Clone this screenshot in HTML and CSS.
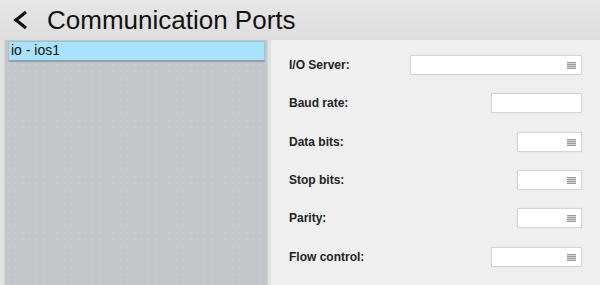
FILE: index.html
```html
<!DOCTYPE html>
<html>
<head>
<meta charset="utf-8">
<link rel="stylesheet" href="styles.css">
</head>
<body>
<div class="app">
  <header class="header">
    <svg class="back" width="18" height="20" viewBox="0 0 18 20"><polyline points="14,2 4,10 14,18" fill="none" stroke="#111" stroke-width="3.2" stroke-linejoin="miter"/></svg>
    <h1 class="title">Communication Ports</h1>
  </header>
  <div class="main">
    <aside class="sidebar">
      <div class="list-item">io - ios1</div>
    </aside>
    <section class="form">
      <div class="row"><span class="label">I/O Server:</span><div class="field w172"><span class="menu"></span></div></div>
      <div class="row"><span class="label">Baud rate:</span><div class="field w91"></div></div>
      <div class="row"><span class="label">Data bits:</span><div class="field w65"><span class="menu"></span></div></div>
      <div class="row"><span class="label">Stop bits:</span><div class="field w65"><span class="menu"></span></div></div>
      <div class="row"><span class="label">Parity:</span><div class="field w65"><span class="menu"></span></div></div>
      <div class="row"><span class="label">Flow control:</span><div class="field w91"><span class="menu"></span></div></div>
    </section>
  </div>
</div>
</body>
</html>
```
FILE: styles.css
```css
html, body {
  margin: 0;
  padding: 0;
}
body {
  width: 600px;
  height: 285px;
  overflow: hidden;
  font-family: "Liberation Sans", Arial, sans-serif;
  background: #e2e2e2;
}
.app {
  display: flex;
  flex-direction: column;
  height: 285px;
}
.header {
  height: 40px;
  display: flex;
  align-items: center;
  background: linear-gradient(#e6e6e6, #dedede);
  padding-left: 12px;
  box-sizing: border-box;
}
.back {
  display: block;
  margin-top: 0;
}
.title {
  margin: 0 0 0 17px;
  font-weight: normal;
  font-size: 26px;
  color: #111;
  letter-spacing: 0;
}
.main {
  flex: 1;
  display: flex;
}
.sidebar {
  width: 264px;
  margin-left: 4px;
  background-color: #c5c6c9;
  background-image: radial-gradient(circle, rgba(255,255,255,0.1) 0.8px, transparent 1.2px);
  background-size: 7px 7px;
  border-left: 1px solid #d4d4d6;
  border-right: 1px solid #d2d3d5;
  padding: 1px 2px 0 3px;
  box-sizing: border-box;
}
.list-item {
  height: 21px;
  box-sizing: border-box;
  background: #a9e3fb;
  border: 1px solid #9cc3d3;
  border-bottom: 2px solid #8aa3ae;
  font-size: 14px;
  color: #111;
  padding-left: 2px;
  line-height: 17px;
}
.form {
  flex: 1;
  margin-left: 3px;
  background: #efefef;
  padding: 6px 18px 0 18px;
  box-sizing: border-box;
}
.row {
  height: 38.3px;
  display: flex;
  align-items: center;
  justify-content: space-between;
}
.label {
  font-size: 12px;
  font-weight: bold;
  color: #222;
}
.field {
  height: 20px;
  box-sizing: border-box;
  background: #fff;
  border: 1px solid #d6d6d6;
  box-shadow: 0 0 1px rgba(0,0,0,0.12);
  position: relative;
}
.w172 { width: 172px; }
.w91 { width: 91px; }
.w65 { width: 65px; }
.menu {
  position: absolute;
  right: 5px;
  top: 6px;
  width: 9px;
  height: 7px;
  background: repeating-linear-gradient(#999 0, #999 1px, #d8d8d8 1px, #d8d8d8 2px);
}
```
